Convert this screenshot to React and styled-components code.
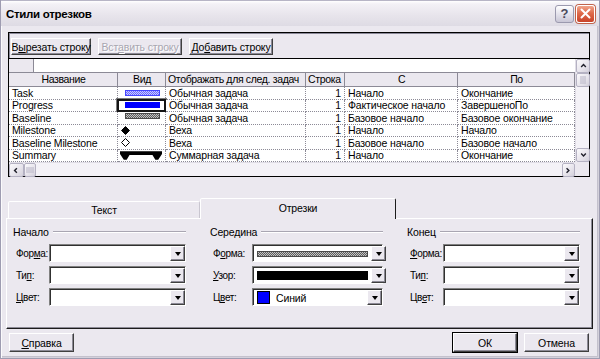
import styled, { createGlobalStyle } from 'styled-components';

const FACE = '#ebe8ef';
const FONT = '"Liberation Sans", Arial, sans-serif';
const COLS = '109px 48px 140px 39px 113px 117px';

const GlobalStyle = createGlobalStyle`
  html, body { margin: 0; padding: 0; background: ${FACE}; }
  body { font-family: ${FONT}; font-size: 10.5px; letter-spacing: -0.15px; color: #000; }
  * { box-sizing: border-box; }
`;

const Window = styled.div`
  width: 600px;
  height: 359px;
  display: flex;
  flex-direction: column;
  background: ${FACE};
  border: 1px solid #9e9cb1;
  border-top: none;
  box-shadow: inset 1px 0 #fbfafc, inset -1px 0 #d4d1db, inset 0 -1px #d4d1db, inset -2px 0 #c4c1cd, inset 0 -2px #c4c1cd;
  overflow: hidden;
`;

const TitleBar = styled.div`
  height: 26px;
  flex: none;
  display: flex;
  align-items: center;
  padding: 0 4px 0 5px;
  background: linear-gradient(180deg, #ffffff 0%, #f3f1f6 12%, #e8e5ec 55%, #dedbe4 100%);
  border-top: 1px solid #b7b5c6;
`;

const Title = styled.div`
  flex: 1;
  font-weight: bold;
  font-size: 11.5px;
  letter-spacing: -0.3px;
  padding-top: 1px;
`;

const CapButton = styled.div`
  width: 19px;
  height: 18px;
  margin-left: 2px;
  border-radius: 3px;
  display: flex;
  align-items: center;
  justify-content: center;
  border: 1px solid ${p => (p.$close ? '#ffffff' : '#9b99ae')};
  background: ${p =>
    p.$close
      ? 'linear-gradient(180deg, #f0a58c 0%, #df6a4a 45%, #c94329 100%)'
      : 'linear-gradient(180deg, #ffffff 0%, #e4e2ec 50%, #c9c6d6 100%)'};
  box-shadow: ${p => (p.$close ? '0 0 0 1px #c0644c' : 'none')};
  color: #4a4a5c;
  font-weight: bold;
  font-size: 13px;
`;

const Body = styled.div`
  flex: 1;
  display: flex;
  flex-direction: column;
  padding: 0 2px;
`;

const Frame = styled.div`
  margin: 6px 7px 0 5px;
  border: 1px solid #000;
  box-shadow: inset 1px 1px #8a8898;
`;

const Toolbar = styled.div`
  height: 26px;
  display: flex;
  gap: 7px;
  padding: 5px 2px 0;
  border-bottom: 1px solid #000;
`;

const Button = styled.div`
  width: ${p => p.$w}px;
  height: ${p => p.$h || 17}px;
  display: flex;
  align-items: center;
  justify-content: center;
  white-space: nowrap;
  background: ${FACE};
  color: ${p => (p.$disabled ? '#a8a6b0' : '#000')};
  text-shadow: ${p => (p.$disabled ? '1px 1px #ffffff' : 'none')};
  border: 1px solid;
  border-color: #ffffff #404040 #404040 #ffffff;
  box-shadow: inset -1px -1px #8c8a96${p => (p.$default ? ', 0 0 0 1px #000' : '')};
`;

const Grid = styled.div`
  display: grid;
  grid-template-columns: 566px 14px;
  grid-template-rows: auto 14px;
  background: #fff;
`;

const Table = styled.div`
  display: flex;
  flex-direction: column;
`;

const EditRow = styled.div`
  height: 14px;
  display: flex;
  border-bottom: 1px solid #8c8a96;
`;

const Corner = styled.div`
  width: 25px;
  background: ${FACE};
  border-right: 1px solid #8c8a96;
`;

const Row = styled.div`
  display: grid;
  grid-template-columns: ${COLS};
  height: ${p => (p.$head ? 14 : 12.5)}px;
`;

const HeadCell = styled.div`
  background: ${FACE};
  border-right: 1px solid #8c8a96;
  border-bottom: 1px solid #8c8a96;
  text-align: ${p => p.$align || 'center'};
  padding: 0 1px 0 2px;
  line-height: 13px;
  letter-spacing: -0.35px;
  white-space: nowrap;
  overflow: hidden;
`;

const Cell = styled.div`
  position: relative;
  display: flex;
  align-items: ${p => (p.$top ? 'flex-start' : 'center')};
  justify-content: ${p => (p.$align === 'right' ? 'flex-end' : 'flex-start')};
  padding: ${p => (p.$top ? '1px' : '0')} 3px 0 ${p => p.$pad ?? 3}px;
  background: #fff;
  border-right: 1px dotted #8c8a96;
  border-bottom: 1px dotted #8c8a96;
  white-space: nowrap;
  overflow: ${p => (p.$selected ? 'visible' : 'hidden')};
  line-height: 12px;

  ${p =>
    p.$selected &&
    `&::after {
      content: '';
      position: absolute;
      inset: -1px -1px -1px -1px;
      border: 2px solid #141414;
      box-shadow: 0 0 0 1px #7a7a7a;
    }`}
`;

const VScroll = styled.div`
  display: flex;
  flex-direction: column;
  background: #f4f2f7;
  border-left: 1px solid #e0dde6;
`;

const HScroll = styled.div`
  display: flex;
  background: #f4f2f7;
  border-top: 1px solid #e0dde6;
`;

const ScrollBtn = styled.div`
  width: ${p => p.$w || 14}px;
  height: ${p => p.$h || 14}px;
  flex: none;
  display: flex;
  align-items: center;
  justify-content: center;
  background: linear-gradient(135deg, #fbfafc 0%, #e6e3eb 60%, #d3d0db 100%);
  border: 1px solid #b5b2c3;
  border-radius: 2px;
`;

const Track = styled.div`
  flex: 1;
`;

const ScrollCorner = styled.div`
  background: ${FACE};
`;

const TabStrip = styled.div`
  margin: 20px 4px 0 3px;
  padding-left: 2px;
  display: flex;
  align-items: flex-end;
  height: 21px;
`;

const Tab = styled.div`
  width: ${p => (p.$active ? 196 : 192)}px;
  height: ${p => (p.$active ? 21 : 17)}px;
  margin-bottom: ${p => (p.$active ? -1 : 0)}px;
  position: relative;
  z-index: ${p => (p.$active ? 1 : 0)};
  display: flex;
  align-items: center;
  justify-content: center;
  padding-bottom: ${p => (p.$active ? 2 : 0)}px;
  background: ${FACE};
  border: 1px solid;
  border-bottom: none;
  border-color: #ffffff ${p => (p.$active ? '#1c1c1c' : '#c9c6d0')} transparent #ffffff;
  border-radius: 2px 2px 0 0;
`;

const Panel = styled.div`
  margin: 0 4px 0 3px;
  height: 111px;
  display: flex;
  gap: 24px;
  padding: 6px 0 0 6px;
  border: 1px solid;
  border-color: #ffffff #1c1c1c #1c1c1c #ffffff;
  box-shadow: inset -1px -1px #8c8a96;
`;

const Group = styled.div`
  width: 173px;
  display: flex;
  flex-direction: column;
`;

const GroupHead = styled.div`
  height: 13px;
  display: flex;
  align-items: center;
  gap: 4px;
  margin-bottom: 6px;
`;

const Rule = styled.div`
  flex: 1;
  height: 2px;
  border-top: 1px solid #a9a6b2;
  border-bottom: 1px solid #ffffff;
`;

const Field = styled.div`
  height: 18px;
  display: flex;
  align-items: center;
  margin-bottom: 4px;
`;

const FieldLabel = styled.div`
  flex: 1 0 auto;
  padding: 0 1px 0 3px;
  white-space: nowrap;
  font-size: 10px;
  letter-spacing: -0.35px;
`;

const Combo = styled.div`
  width: ${p => p.$w || 137}px;
  flex: none;
  height: 18px;
  display: flex;
  background: #fff;
  border: 1px solid;
  border-color: #808080 #ffffff #ffffff #808080;
  box-shadow: inset 1px 1px #303030;
`;

const ComboValue = styled.div`
  flex: 1;
  display: flex;
  align-items: center;
  gap: 6px;
  padding: 1px 3px 0 4px;
`;

const DropBtn = styled.div`
  width: 15px;
  flex: none;
  margin: 1px 0 0;
  display: flex;
  align-items: center;
  justify-content: center;
  background: ${FACE};
  border: 1px solid;
  border-color: #ffffff #404040 #404040 #ffffff;
  box-shadow: inset -1px -1px #8c8a96;

  &::after {
    content: '';
    border-left: 3.5px solid transparent;
    border-right: 3.5px solid transparent;
    border-top: 4px solid #000;
  }
`;

const Swatch = styled.div`
  width: 13px;
  height: 13px;
  background: #0000ff;
  border: 1px solid #000;
  flex: none;
`;

const SolidBar = styled.div`
  width: 111px;
  height: ${p => p.$h}px;
  background: #000;
`;

const Footer = styled.div`
  display: flex;
  gap: 7px;
  margin: 4px 8px 0 6px;
`;

const Spacer = styled.div`
  flex: 1;
`;

const Checker = ({ id, a, b }) => (
  <pattern id={id} width="2" height="2" patternUnits="userSpaceOnUse">
    <rect width="2" height="2" fill={a} />
    <rect width="1" height="1" fill={b} />
    <rect x="1" y="1" width="1" height="1" fill={b} />
  </pattern>
);

const TaskBar = () => (
  <svg width="35" height="6" viewBox="0 0 35 6">
    <defs><Checker id="taskFill" a="#6a6aff" b="#c9c9ff" /></defs>
    <rect x="0.5" y="0.5" width="34" height="5" fill="url(#taskFill)" stroke="#4545ff" />
  </svg>
);

const ProgressBar = () => (
  <svg width="35" height="6" viewBox="0 0 35 6">
    <rect width="35" height="6" fill="#0000ff" />
  </svg>
);

const GrayBar = ({ id, w }) => (
  <svg width={w} height="6" viewBox={`0 0 ${w} 6`}>
    <defs><Checker id={id} a="#5e5e5e" b="#c4c4c4" /></defs>
    <rect x="0.5" y="0.5" width={w - 1} height="5" fill={`url(#${id})`} stroke="#4a4a4a" />
  </svg>
);

const Diamond = ({ hollow }) => (
  <svg width="9" height="9" viewBox="0 0 9 9">
    <polygon points="4.5,0.5 8.5,4.5 4.5,8.5 0.5,4.5" fill={hollow ? '#fff' : '#000'} stroke="#000" />
  </svg>
);

const SummaryBar = () => (
  <svg width="44" height="10" viewBox="0 0 44 10">
    <path d="M0 0 H44 V3 L40 9 H37 L34 4 H10 L7 9 H4 L0 3 Z" fill="#000" />
  </svg>
);

const Chevron = ({ dir }) => {
  const pts = {
    up: '1.5,5 4.5,2 7.5,5',
    down: '1.5,2 4.5,5 7.5,2',
    left: '5,1.5 2,4.5 5,7.5',
    right: '2,1.5 5,4.5 2,7.5',
  }[dir];
  return (
    <svg width="9" height="7" viewBox="0 0 9 9">
      <polyline points={pts} fill="none" stroke="#1f1f2a" strokeWidth="1.8" />
    </svg>
  );
};

const Grip = ({ vertical }) => (
  <svg width="8" height="8" viewBox="0 0 8 8">
    {[1, 3, 5, 7].map(v =>
      vertical ? (
        <line key={v} x1="1" x2="7" y1={v} y2={v} stroke="#b8b5c6" />
      ) : (
        <line key={v} y1="1" y2="7" x1={v} x2={v} stroke="#b8b5c6" />
      )
    )}
  </svg>
);

const views = {
  task: { pad: 7, node: <TaskBar /> },
  progress: { pad: 7, node: <ProgressBar /> },
  baseline: { pad: 7, top: true, node: <GrayBar id="baseFill" w={35} /> },
  milestone: { pad: 3, node: <Diamond /> },
  baseMilestone: { pad: 3, node: <Diamond hollow /> },
  summary: { pad: 2, top: true, node: <SummaryBar /> },
};

const rows = [
  { name: 'Task', view: 'task', show: 'Обычная задача', from: 'Начало', to: 'Окончание' },
  { name: 'Progress', view: 'progress', show: 'Обычная задача', from: 'Фактическое начало', to: 'ЗавершеноПо', selected: true },
  { name: 'Baseline', view: 'baseline', show: 'Обычная задача', from: 'Базовое начало', to: 'Базовое окончание' },
  { name: 'Milestone', view: 'milestone', show: 'Веха', from: 'Начало', to: 'Начало' },
  { name: 'Baseline Milestone', view: 'baseMilestone', show: 'Веха', from: 'Базовое начало', to: 'Базовое начало' },
  { name: 'Summary', view: 'summary', show: 'Суммарная задача', from: 'Начало', to: 'Окончание' },
];

const CloseX = () => (
  <svg width="11" height="11" viewBox="0 0 11 11">
    <path d="M1.5 1.5 L9.5 9.5 M9.5 1.5 L1.5 9.5" stroke="#fff" strokeWidth="2" strokeLinecap="round" />
  </svg>
);

export default function App() {
  return (
    <Window>
      <GlobalStyle />
      <TitleBar>
        <Title>Стили отрезков</Title>
        <CapButton>?</CapButton>
        <CapButton $close><CloseX /></CapButton>
      </TitleBar>
      <Body>
        <Frame>
          <Toolbar>
            <Button $w={80}>В<u>ы</u>резать строку</Button>
            <Button $w={84} $disabled>Вст<u>а</u>вить строку</Button>
            <Button $w={84}>До<u>б</u>авить строку</Button>
          </Toolbar>
          <Grid>
            <Table>
              <EditRow>
                <Corner />
              </EditRow>
              <Row $head>
                <HeadCell>Название</HeadCell>
                <HeadCell>Вид</HeadCell>
                <HeadCell $align="left">Отображать для след. задач</HeadCell>
                <HeadCell $align="left">Строка</HeadCell>
                <HeadCell>С</HeadCell>
                <HeadCell>По</HeadCell>
              </Row>
              {rows.map(r => {
                const v = views[r.view];
                return (
                  <Row key={r.name}>
                    <Cell>{r.name}</Cell>
                    <Cell $pad={v.pad} $top={v.top} $selected={r.selected}>{v.node}</Cell>
                    <Cell>{r.show}</Cell>
                    <Cell $align="right">1</Cell>
                    <Cell>{r.from}</Cell>
                    <Cell>{r.to}</Cell>
                  </Row>
                );
              })}
            </Table>
            <VScroll>
              <ScrollBtn><Chevron dir="up" /></ScrollBtn>
              <ScrollBtn $h={14}><Grip vertical /></ScrollBtn>
              <Track />
              <ScrollBtn><Chevron dir="down" /></ScrollBtn>
            </VScroll>
            <HScroll>
              <ScrollBtn $w={15}><Chevron dir="left" /></ScrollBtn>
              <ScrollBtn $w={12}><Grip /></ScrollBtn>
              <Track />
              <ScrollBtn $w={13}><Chevron dir="right" /></ScrollBtn>
            </HScroll>
            <ScrollCorner />
          </Grid>
        </Frame>

        <TabStrip>
          <Tab>Текст</Tab>
          <Tab $active>Отрезки</Tab>
        </TabStrip>
        <Panel>
          <Group>
            <GroupHead>Начало<Rule /></GroupHead>
            <Field>
              <FieldLabel>Фор<u>м</u>а:</FieldLabel>
              <Combo><ComboValue /><DropBtn /></Combo>
            </Field>
            <Field>
              <FieldLabel>Ти<u>п</u>:</FieldLabel>
              <Combo><ComboValue /><DropBtn /></Combo>
            </Field>
            <Field>
              <FieldLabel><u>Ц</u>вет:</FieldLabel>
              <Combo><ComboValue /><DropBtn /></Combo>
            </Field>
          </Group>
          <Group>
            <GroupHead>Середина<Rule /></GroupHead>
            <Field>
              <FieldLabel>Ф<u>о</u>рма:</FieldLabel>
              <Combo $w={131}><ComboValue><GrayBar id="midFill" w={111} /></ComboValue><DropBtn /></Combo>
            </Field>
            <Field>
              <FieldLabel><u>У</u>зор:</FieldLabel>
              <Combo $w={131}><ComboValue><SolidBar $h={9} /></ComboValue><DropBtn /></Combo>
            </Field>
            <Field>
              <FieldLabel>Ц<u>в</u>ет:</FieldLabel>
              <Combo $w={131}><ComboValue><Swatch />Синий</ComboValue><DropBtn /></Combo>
            </Field>
          </Group>
          <Group>
            <GroupHead>Конец<Rule /></GroupHead>
            <Field>
              <FieldLabel><u>Ф</u>орма:</FieldLabel>
              <Combo><ComboValue /><DropBtn /></Combo>
            </Field>
            <Field>
              <FieldLabel>Ти<u>п</u>:</FieldLabel>
              <Combo><ComboValue /><DropBtn /></Combo>
            </Field>
            <Field>
              <FieldLabel>Цв<u>е</u>т:</FieldLabel>
              <Combo><ComboValue /><DropBtn /></Combo>
            </Field>
          </Group>
        </Panel>

        <Footer>
          <Button $w={65} $h={19}><u>С</u>правка</Button>
          <Spacer />
          <Button $w={64} $h={19} $default>ОК</Button>
          <Button $w={65} $h={19}>Отмена</Button>
        </Footer>
      </Body>
    </Window>
  );
}
